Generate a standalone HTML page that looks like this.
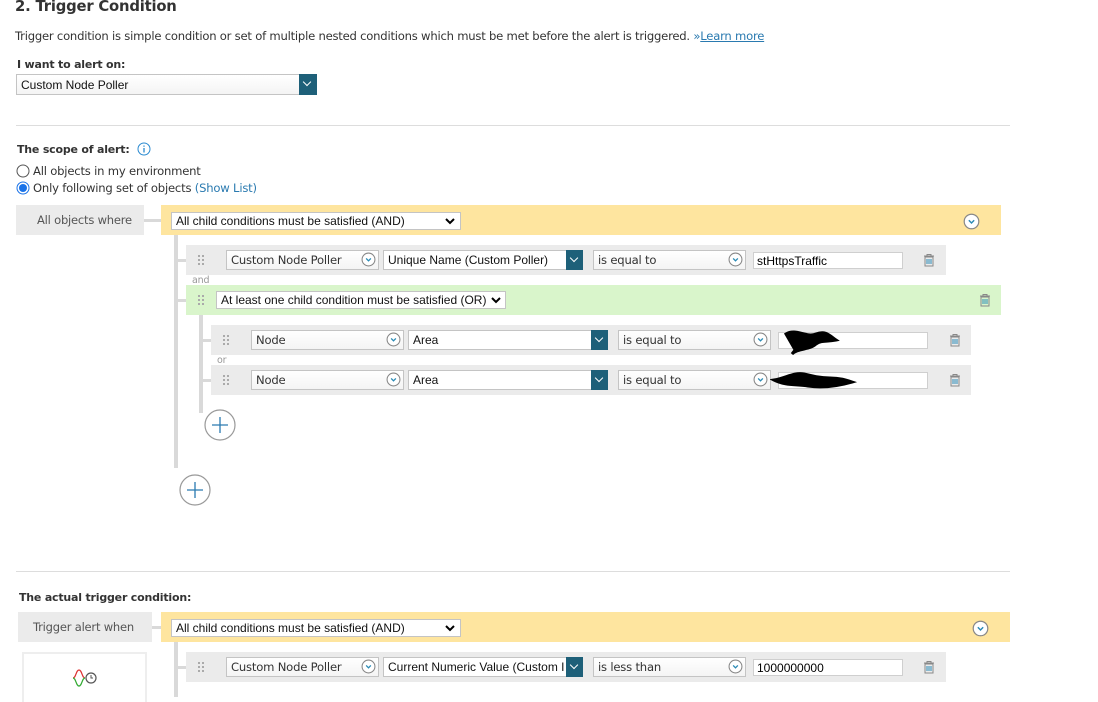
<!DOCTYPE html>
<html><head><meta charset="utf-8">
<style>
*{box-sizing:border-box;margin:0;padding:0}
body{width:1098px;height:697px;overflow:hidden;background:#fff;position:relative;font-family:"DejaVu Sans","Liberation Sans",sans-serif;color:#333}
.a{position:absolute}
.t{font-size:11.5px;letter-spacing:-0.2px;white-space:nowrap}
.b{font-weight:bold}
.sel{position:absolute;background:linear-gradient(#fff,#f4f4f4);border:1px solid #c4c4c4;height:19px;font:12px "Liberation Sans",sans-serif;color:#111;padding:2px 4px;white-space:nowrap;overflow:hidden}
.ss{font-family:"DejaVu Sans",sans-serif;font-size:11.6px;letter-spacing:-0.2px;color:#333;padding-top:2px}
.btn{position:absolute;background:#1e6079;height:19px;width:17px}
.btn:after{content:"";position:absolute;left:5px;top:5px;width:5px;height:5px;border-right:1px solid #fff;border-bottom:1px solid #fff;transform:rotate(45deg)}
.row{position:absolute;background:#ebebeb;height:30px}
.yel{position:absolute;background:#fee59f;height:30px}
.inp{position:absolute;background:#fff;border:1px solid #cfcfcf;height:17px;font:12px "Liberation Sans",sans-serif;color:#000;padding:1px 3px}
.gl{position:absolute;background:#d9d9d9}
</style></head><body>
<svg width="0" height="0" style="position:absolute">
<defs>
<symbol id="circ" viewBox="0 0 14 14"><circle cx="7" cy="7" r="6" fill="#fff" stroke="#888" stroke-width="1"/><path d="M4.8 6l2.2 2.2L9.2 6" fill="none" stroke="#2a8ab5" stroke-width="1.2"/></symbol>
<symbol id="trash" viewBox="0 0 12 14"><path d="M1 3h10M4 3V1.5h4V3M2 4h8v9H2z" fill="none" stroke="#888" stroke-width="1"/><path d="M4 6v5M6 6v5M8 6v5" stroke="#2a8ab5" stroke-width="1"/></symbol>
<symbol id="dots" viewBox="0 0 6 10"><g fill="#aaa"><rect x="0" y="0" width="2" height="2"/><rect x="4" y="0" width="2" height="2"/><rect x="0" y="4" width="2" height="2"/><rect x="4" y="4" width="2" height="2"/><rect x="0" y="8" width="2" height="2"/><rect x="4" y="8" width="2" height="2"/></g></symbol>
<symbol id="plus" viewBox="0 0 32 32"><circle cx="16" cy="16" r="15" fill="#fff" stroke="#999" stroke-width="1.2"/><path d="M16 8v16M8 16h16" stroke="#2a7ab0" stroke-width="1.3"/></symbol>
<symbol id="chev" viewBox="0 0 10 8"><path d="M1 2l4 4 4-4" fill="none" stroke="#000" stroke-width="2"/></symbol>
</defs></svg>

<div class="a b" style="left:15px;top:-2px;font-size:14.8px;color:#333;letter-spacing:-0.2px">2. Trigger Condition</div>
<div class="a t" style="left:15px;top:29px;font-size:11.6px;letter-spacing:-0.22px">Trigger condition is simple condition or set of multiple nested conditions which must be met before the alert is triggered. <span style="color:#2a7ab0">»<u>Learn more</u></span></div>
<div class="a t b" style="left:17px;top:58px;font-size:11px">I want to alert on:</div>
<div class="sel" style="left:16px;top:74px;width:284px;height:21px;font-size:12px;padding-top:3px">Custom Node Poller</div>
<div class="btn" style="left:299px;top:74px;height:21px;width:18px"></div>
<div class="a" style="left:16px;top:125px;width:994px;height:1px;background:#ddd"></div>

<div class="a t b" style="left:17px;top:143px;font-size:11px">The scope of alert:</div>
<svg class="a" style="left:137px;top:142px" width="14" height="14" viewBox="0 0 14 14"><circle cx="7" cy="7" r="6" fill="none" stroke="#2a8ad0"/><path d="M7 6v4.5M7 3.5v1.2" stroke="#2a8ad0" stroke-width="1.3"/></svg>
<svg class="a" style="left:16px;top:164px" width="14" height="14"><circle cx="7" cy="7" r="6" fill="#fff" stroke="#555"/></svg>
<div class="a t" style="left:33px;top:164px;font-size:11.6px">All objects in my environment</div>
<svg class="a" style="left:16px;top:181px" width="14" height="14"><circle cx="7" cy="7" r="6" fill="#fff" stroke="#1a73e8"/><circle cx="7" cy="7" r="4" fill="#1a73e8"/></svg>
<div class="a t" style="left:33px;top:181px;font-size:11.6px">Only following set of objects <span style="color:#2a7ab0">(Show List)</span></div>

<div class="a" style="left:16px;top:205px;width:128px;height:30px;background:#ebebeb"></div>
<div class="a t" style="left:37px;top:213px;color:#555">All objects where</div>
<div class="gl" style="left:144px;top:219px;width:17px;height:3px"></div>
<div class="yel" style="left:161px;top:205px;width:840px"></div>
<div class="sel" style="left:171px;top:212px;width:290px;height:18px;padding-top:1px;background:#fff">All child conditions must be satisfied (AND)</div>
<svg class="a" style="left:445px;top:217px" width="10" height="8"><use href="#chev"/></svg>
<svg class="a" style="left:963px;top:213px" width="17" height="17"><use href="#circ"/></svg>

<div class="gl" style="left:174px;top:235px;width:4px;height:233px"></div>
<div class="gl" style="left:178px;top:259px;width:8px;height:3px"></div>
<div class="gl" style="left:178px;top:299px;width:8px;height:3px"></div>

<div class="row" style="left:186px;top:245px;width:760px"></div>
<svg class="a" style="left:198px;top:255px" width="6" height="10"><use href="#dots"/></svg>
<div class="sel ss" style="left:226px;top:250px;width:153px;height:20px">Custom Node Poller</div>
<svg class="a" style="left:361px;top:252px" width="15" height="15"><use href="#circ"/></svg>
<div class="sel" style="left:383px;top:250px;width:184px;height:20px;background:#fff">Unique Name (Custom Poller)</div>
<div class="btn" style="left:566px;top:250px;height:20px"></div>
<div class="sel ss" style="left:593px;top:250px;width:153px;height:20px">is equal to</div>
<svg class="a" style="left:728px;top:252px" width="15" height="15"><use href="#circ"/></svg>
<div class="inp" style="left:753px;top:252px;width:150px">stHttpsTraffic</div>
<svg class="a" style="left:923px;top:253px" width="12" height="14"><use href="#trash"/></svg>

<div class="a t" style="left:192px;top:275px;font-size:9.5px;color:#999">and</div>

<div class="a" style="left:186px;top:285px;width:815px;height:30px;background:#d9f5cb"></div>
<svg class="a" style="left:198px;top:295px" width="6" height="10"><use href="#dots"/></svg>
<div class="sel" style="left:216px;top:291px;width:290px;height:18px;padding-top:1px;background:#fff">At least one child condition must be satisfied (OR)</div>
<svg class="a" style="left:491px;top:296px" width="10" height="8"><use href="#chev"/></svg>
<svg class="a" style="left:979px;top:293px" width="12" height="14"><use href="#trash"/></svg>

<div class="gl" style="left:199px;top:315px;width:4px;height:98px"></div>
<div class="gl" style="left:203px;top:339px;width:8px;height:3px"></div>
<div class="gl" style="left:203px;top:379px;width:8px;height:3px"></div>

<div class="row" style="left:211px;top:325px;width:760px"></div>
<svg class="a" style="left:223px;top:335px" width="6" height="10"><use href="#dots"/></svg>
<div class="sel ss" style="left:251px;top:330px;width:153px;height:20px">Node</div>
<svg class="a" style="left:386px;top:332px" width="15" height="15"><use href="#circ"/></svg>
<div class="sel" style="left:408px;top:330px;width:184px;height:20px;background:#fff">Area</div>
<div class="btn" style="left:591px;top:330px;height:20px"></div>
<div class="sel ss" style="left:618px;top:330px;width:153px;height:20px">is equal to</div>
<svg class="a" style="left:753px;top:332px" width="15" height="15"><use href="#circ"/></svg>
<div class="inp" style="left:778px;top:332px;width:150px"></div>
<svg class="a" style="left:780px;top:328px" width="70" height="32"><path d="M6 6c10-6 20 4 30 0s14 2 20 6c-10 2-14 0-20 4-6 6-18 4-24 10 6-8 10-10 2-14 4 4 6 6 0 8z" fill="#000" stroke="#000" stroke-width="3"/></svg>
<svg class="a" style="left:949px;top:333px" width="12" height="14"><use href="#trash"/></svg>

<div class="a t" style="left:217px;top:355px;font-size:9.5px;color:#999">or</div>

<div class="row" style="left:211px;top:365px;width:760px"></div>
<svg class="a" style="left:223px;top:375px" width="6" height="10"><use href="#dots"/></svg>
<div class="sel ss" style="left:251px;top:370px;width:153px;height:20px">Node</div>
<svg class="a" style="left:386px;top:372px" width="15" height="15"><use href="#circ"/></svg>
<div class="sel" style="left:408px;top:370px;width:184px;height:20px;background:#fff">Area</div>
<div class="btn" style="left:591px;top:370px;height:20px"></div>
<div class="sel ss" style="left:618px;top:370px;width:153px;height:20px">is equal to</div>
<svg class="a" style="left:753px;top:372px" width="15" height="15"><use href="#circ"/></svg>
<div class="inp" style="left:778px;top:372px;width:150px"></div>
<svg class="a" style="left:770px;top:368px" width="90" height="24"><path d="M4 12c12-2 20-8 30-6 8 2 16 4 26 4s16 2 22 4c-14 4-30 6-44 4-12-2-22 0-34-6z" fill="#000" stroke="#000" stroke-width="3"/></svg>
<svg class="a" style="left:949px;top:373px" width="12" height="14"><use href="#trash"/></svg>

<svg class="a" style="left:204px;top:409px" width="32" height="32"><use href="#plus"/></svg>
<svg class="a" style="left:179px;top:474px" width="32" height="32"><use href="#plus"/></svg>

<div class="a" style="left:16px;top:571px;width:994px;height:1px;background:#ddd"></div>
<div class="a t b" style="left:19px;top:591px;font-size:11px">The actual trigger condition:</div>

<div class="a" style="left:18px;top:612px;width:134px;height:30px;background:#ebebeb"></div>
<div class="a t" style="left:33px;top:620px;color:#555">Trigger alert when</div>
<div class="gl" style="left:152px;top:626px;width:9px;height:3px"></div>
<div class="yel" style="left:161px;top:612px;width:849px"></div>
<div class="sel" style="left:171px;top:619px;width:290px;height:18px;padding-top:1px;background:#fff">All child conditions must be satisfied (AND)</div>
<svg class="a" style="left:445px;top:624px" width="10" height="8"><use href="#chev"/></svg>
<svg class="a" style="left:972px;top:620px" width="17" height="17"><use href="#circ"/></svg>

<div class="a" style="left:22px;top:652px;width:125px;height:50px;border:2px solid #eee;border-bottom:none"></div>
<svg class="a" style="left:72px;top:668px" width="26" height="20" viewBox="0 0 26 20"><path d="M1 10c3 0 3-8 6-8s3 8 6 8" fill="none" stroke="#d33" stroke-width="1.2"/><path d="M1 10c3 0 3 8 6 8s3-8 6-8" fill="none" stroke="#3a3" stroke-width="1.2"/><circle cx="19" cy="10" r="5" fill="#fff" stroke="#555" stroke-width="1.2"/><path d="M19 7v3h2" fill="none" stroke="#555"/></svg>

<div class="gl" style="left:174px;top:642px;width:4px;height:55px"></div>
<div class="gl" style="left:178px;top:666px;width:8px;height:3px"></div>
<div class="row" style="left:186px;top:652px;width:760px"></div>
<svg class="a" style="left:198px;top:662px" width="6" height="10"><use href="#dots"/></svg>
<div class="sel ss" style="left:226px;top:657px;width:153px;height:20px">Custom Node Poller</div>
<svg class="a" style="left:361px;top:659px" width="15" height="15"><use href="#circ"/></svg>
<div class="sel" style="left:383px;top:657px;width:184px;height:20px;background:#fff">Current Numeric Value (Custom I</div>
<div class="btn" style="left:566px;top:657px;height:20px"></div>
<div class="sel ss" style="left:593px;top:657px;width:153px;height:20px">is less than</div>
<svg class="a" style="left:728px;top:659px" width="15" height="15"><use href="#circ"/></svg>
<div class="inp" style="left:753px;top:659px;width:150px">1000000000</div>
<svg class="a" style="left:923px;top:660px" width="12" height="14"><use href="#trash"/></svg>
</body></html>
